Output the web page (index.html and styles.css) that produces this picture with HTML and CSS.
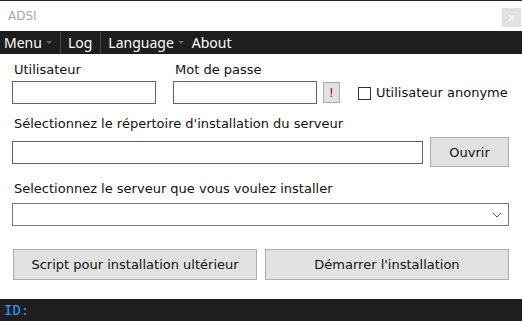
FILE: index.html
```html
<!DOCTYPE html>
<html lang="fr">
<head>
    <meta charset="UTF-8">
    <meta name="viewport" content="width=device-width, initial-scale=1.0">
    <title>ADSI</title>
    <link rel="stylesheet" href="styles.css">
</head>
<body>
    <div class="window">
        <div class="titlebar">
            <span class="title">ADSI</span>
            <button class="close-btn">x</button>
        </div>

        <div class="menubar">
            <span class="menu-item">Menu <span class="caret"></span></span>
            <span class="menu-sep"></span>
            <span class="menu-item">Log</span>
            <span class="menu-sep"></span>
            <span class="menu-item">Language <span class="caret"></span></span>
            <span class="menu-item">About</span>
        </div>

        <div class="content">
            <div class="login-row">
                <div class="field user-field">
                    <label>Utilisateur</label>
                    <input type="text" class="text-input">
                </div>
                <div class="field pass-field">
                    <label>Mot de passe</label>
                    <div class="pass-wrap">
                        <input type="password" class="text-input">
                        <button class="warn-btn">!</button>
                    </div>
                </div>
                <label class="check-label">
                    <span class="checkbox"></span>
                    Utilisateur anonyme
                </label>
            </div>

            <div class="section dir-section">
                <label>Sélectionnez le répertoire d'installation du serveur</label>
                <div class="dir-row">
                    <input type="text" class="text-input dir-input">
                    <button class="btn open-btn">Ouvrir</button>
                </div>
            </div>

            <div class="section server-section">
                <label>Selectionnez le serveur que vous voulez installer</label>
                <div class="select-box">
                    <svg class="chevron" width="10" height="6" viewBox="0 0 10 6">
                        <path d="M1 1 L5 5 L9 1" fill="none" stroke="#555" stroke-width="1"/>
                    </svg>
                </div>
            </div>

            <div class="action-row">
                <button class="btn action-btn">Script pour installation ultérieur</button>
                <button class="btn action-btn">Démarrer l'installation</button>
            </div>
        </div>

        <div class="statusbar">ID:</div>
    </div>
</body>
</html>
```

FILE: styles.css
```css
html, body {
    margin: 0;
    padding: 0;
    background: white;
}
.window {
    width: 522px;
    height: 321px;
    display: flex;
    flex-direction: column;
    font-family: "DejaVu Sans", Verdana, sans-serif;
    font-size: 13px;
    color: #111;
    overflow: hidden;
}
.titlebar {
    border-top: 1px solid #222;
    box-sizing: border-box;
    height: 31px;
    display: flex;
    justify-content: space-between;
    align-items: flex-start;
}
.title {
    color: #a8a8a8;
    font-size: 12px;
    padding: 8px 0 0 8px;
}
.close-btn {
    width: 19px;
    height: 19px;
    margin: 7px 1px 0 0;
    padding: 0;
    border: none;
    background: #e1e1e1;
    color: #f4f4f4;
    font-family: "DejaVu Sans", sans-serif;
    font-size: 11px;
    font-weight: bold;
    line-height: 19px;
}
.menubar {
    height: 23px;
    background: #1e1e1e;
    display: flex;
    align-items: center;
    font-family: "Noto Sans", "Open Sans", sans-serif;
    font-size: 14px;
    color: white;
    padding-left: 4px;
}
.menu-item {
    display: flex;
    align-items: center;
    gap: 4px;
    padding-right: 8px;
}
.caret {
    width: 0;
    height: 0;
    border-left: 3px solid transparent;
    border-right: 3px solid transparent;
    border-top: 3px solid #666;
}
.menu-sep {
    width: 1px;
    height: 21px;
    background: #4a4a4a;
    margin-right: 7px;
}
.content {
    padding: 8px 12px 0 12px;
}
label {
    display: block;
    line-height: 16px;
    padding-left: 2px;
}
.text-input {
    box-sizing: border-box;
    height: 23px;
    border: 1px solid #646464;
    background: white;
    margin: 0;
    padding: 0 4px;
}
.login-row {
    display: flex;
    align-items: flex-end;
}
.field label {
    margin-bottom: 3px;
}
.user-field .text-input {
    width: 144px;
}
.pass-field {
    margin-left: 17px;
}
.pass-wrap {
    display: flex;
    align-items: center;
    gap: 6px;
}
.pass-field .text-input {
    width: 144px;
}
.warn-btn {
    width: 17px;
    height: 21px;
    padding: 0;
    border: 1px solid #adadad;
    background: #e1e1e1;
    color: #a0002e;
    font-family: "DejaVu Sans", sans-serif;
    font-size: 12px;
}
.check-label {
    display: flex;
    align-items: center;
    gap: 5px;
    margin-left: 18px;
    margin-bottom: 3px;
    padding-left: 0;
}
.checkbox {
    width: 11px;
    height: 11px;
    border: 1px solid #333;
    background: white;
}
.dir-section {
    margin-top: 12px;
}
.dir-section label {
    margin-bottom: 5px;
}
.dir-row {
    display: flex;
    align-items: center;
    gap: 7px;
}
.dir-input {
    width: 411px;
}
.btn {
    box-sizing: border-box;
    border: 1px solid #adadad;
    background: #e1e1e1;
    color: #111;
    font-family: "DejaVu Sans", Verdana, sans-serif;
    font-size: 13px;
    padding: 0;
}
.open-btn {
    width: 79px;
    height: 30px;
}
.server-section {
    margin-top: 14px;
}
.server-section label {
    margin-bottom: 6px;
}
.select-box {
    box-sizing: border-box;
    width: 497px;
    height: 23px;
    border: 1px solid #7a7a7a;
    display: flex;
    justify-content: flex-end;
    align-items: center;
    padding-right: 6px;
}
.action-row {
    display: flex;
    gap: 8px;
    margin-top: 23px;
    padding-left: 1px;
}
.action-btn {
    width: 244px;
    height: 31px;
}
.statusbar {
    margin-top: auto;
    height: 22px;
    background: #1e1e1e;
    color: #3399ff;
    font-family: "DejaVu Sans Mono", "Liberation Mono", monospace;
    font-size: 14px;
    line-height: 22px;
    padding-left: 4px;
}
```
